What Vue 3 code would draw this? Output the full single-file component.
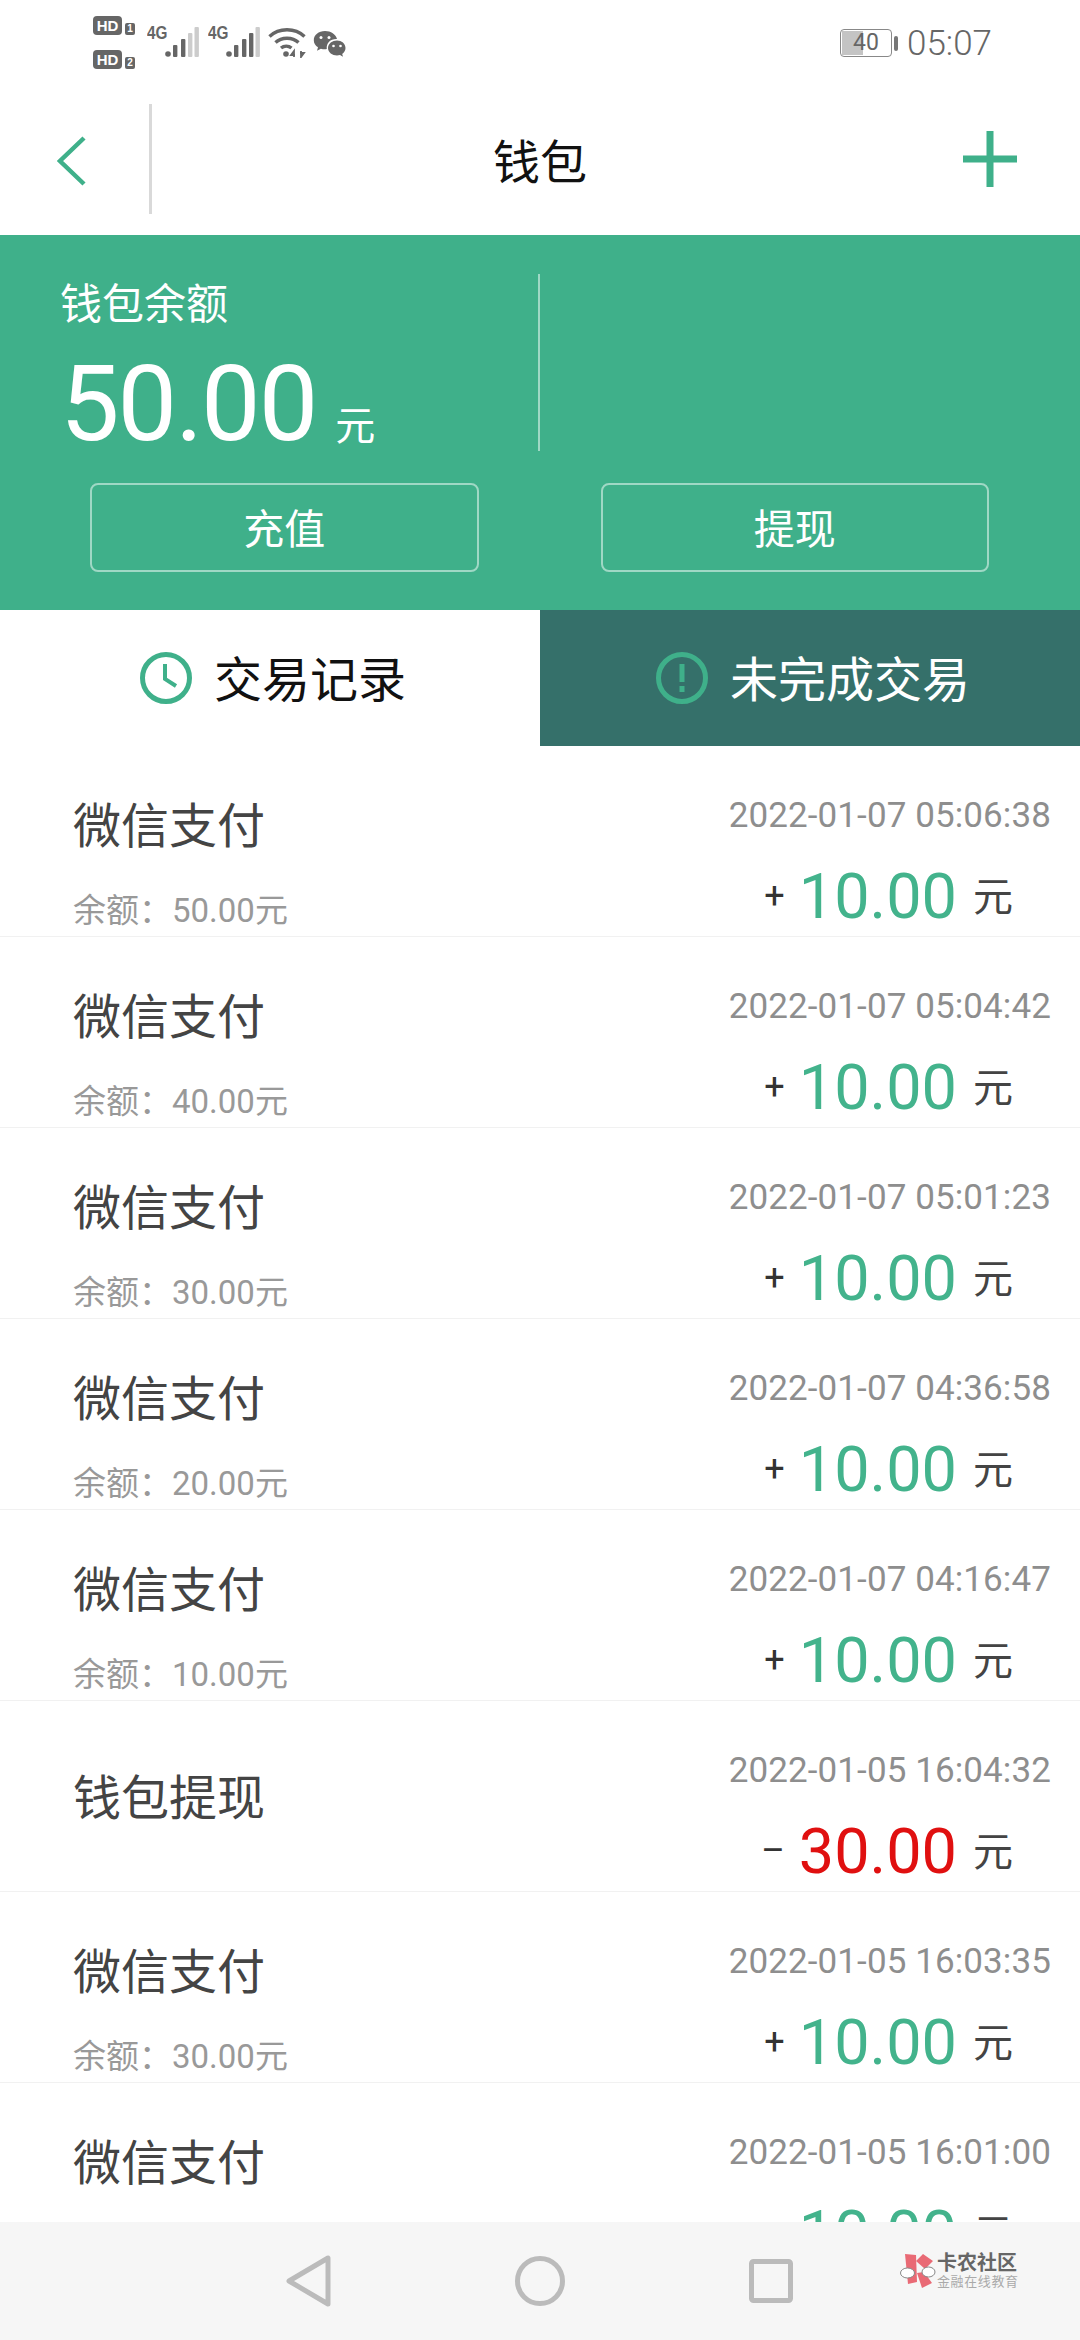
<script setup>
// 钱包流水，金额为正绿色，为负红色
const rows = [
  { name: '微信支付', balance: '50.00', time: '2022-01-07 05:06:38', sign: '+', amount: '10.00' },
  { name: '微信支付', balance: '40.00', time: '2022-01-07 05:04:42', sign: '+', amount: '10.00' },
  { name: '微信支付', balance: '30.00', time: '2022-01-07 05:01:23', sign: '+', amount: '10.00' },
  { name: '微信支付', balance: '20.00', time: '2022-01-07 04:36:58', sign: '+', amount: '10.00' },
  { name: '微信支付', balance: '10.00', time: '2022-01-07 04:16:47', sign: '+', amount: '10.00' },
  { name: '钱包提现', balance: '', time: '2022-01-05 16:04:32', sign: '–', amount: '30.00' },
  { name: '微信支付', balance: '30.00', time: '2022-01-05 16:03:35', sign: '+', amount: '10.00' },
  { name: '微信支付', balance: '20.00', time: '2022-01-05 16:01:00', sign: '+', amount: '10.00' }
]
// 信号栏，亮格数不同
const signals = [2, 3]
</script>

<template>
  <div class="phone">
    <div class="status">
      <div class="status-left">
        <div class="hd-col">
          <div v-for="n in 2" :key="n" class="hd-line">
            <span class="hd">HD</span>
            <span class="hd-num">{{ n }}</span>
          </div>
        </div>
        <div v-for="(lit, i) in signals" :key="i" class="signal">
          <span class="net">4G</span>
          <svg width="34" height="32" viewBox="0 0 34 32">
            <circle cx="3" cy="28" r="2.8" fill="#666" />
            <rect x="8" y="19" width="4.4" height="12" rx="1" fill="#666" />
            <rect x="16" y="13" width="4.4" height="18" rx="1" :fill="lit >= 2 ? '#666' : '#ccc'" />
            <rect x="23" y="7" width="4.4" height="24" rx="1" :fill="lit >= 3 ? '#666' : '#ccc'" />
            <rect x="29.5" y="1" width="4.4" height="30" rx="1" fill="#ccc" />
          </svg>
        </div>
        <svg class="wifi" width="38" height="32" viewBox="0 0 38 32" fill="none" stroke="#666" stroke-width="3.4">
          <path d="M1.5 10.5C11 1.5 27 1.5 36.5 10.5" />
          <path d="M7.5 16.5C13.5 10.8 24.5 10.8 30.5 16.5" />
          <path d="M13 22C16 19.6 20.5 19.6 23.5 22" />
          <circle cx="18" cy="28" r="2.8" fill="#666" stroke="none" />
          <path d="M26 31v-6l-3 4h4M33 25v6l3-4h-4" stroke-width="1.8" />
        </svg>
        <svg class="wechat" width="33" height="28" viewBox="0 0 33 28">
          <path d="M12 1C5.6 1 .8 5 .8 10.2c0 3 1.6 5.4 4.2 7.1l-1 3.4 3.9-2c1.2.3 2.6.6 4.1.6 1 0 1.3-.1 1.8-.2C13 12.6 18 8.6 24 9 22.8 4.4 17.9 1 12 1Z" fill="#666" />
          <path d="M32.5 18C32.5 13.6 28.6 10.5 24 10.5S15 13.6 15 18s4.4 7.5 9 7.5c1 0 2-.2 3-.5l3 1.8-.8-2.9c2.1-1.5 3.3-3.7 3.3-5.9Z" fill="#666" />
          <circle cx="8" cy="7.5" r="1.5" fill="#fff" />
          <circle cx="16" cy="7.5" r="1.5" fill="#fff" />
          <circle cx="20.5" cy="16" r="1.3" fill="#fff" />
          <circle cx="27.5" cy="16" r="1.3" fill="#fff" />
        </svg>
      </div>
      <div class="status-right">
        <div class="battery">
          <div class="battery-box">
            <span class="battery-fill"></span>
            <span class="battery-num">40</span>
          </div>
          <span class="battery-tip"></span>
        </div>
        <span class="clock">05:07</span>
      </div>
    </div>

    <div class="header">
      <div class="back">
        <svg width="30" height="50" viewBox="0 0 30 50" fill="none" stroke="#3fb08a" stroke-width="4.5">
          <path d="M27 2 3 25l24 23" />
        </svg>
      </div>
      <h1 class="title">钱包</h1>
      <div class="plus">
        <svg width="54" height="56" viewBox="0 0 54 56" fill="#3fb08a">
          <rect x="23.5" y="0" width="7" height="56" />
          <rect x="0" y="24.5" width="54" height="7" />
        </svg>
      </div>
    </div>

    <div class="wallet">
      <div class="wallet-top">
        <div class="wallet-left">
          <div class="wallet-label">钱包余额</div>
          <div class="wallet-amount">50.00<span class="wallet-unit">元</span></div>
        </div>
      </div>
      <div class="wallet-btns">
        <button class="btn">充值</button>
        <button class="btn">提现</button>
      </div>
    </div>

    <div class="tabs">
      <div class="tab active">
        <svg width="52" height="52" viewBox="0 0 52 52" fill="none" stroke="#3fb08a">
          <circle cx="26" cy="26" r="23.5" stroke-width="5" />
          <path d="M25 12v15l11 7" stroke-width="4" />
        </svg>
        <span>交易记录</span>
      </div>
      <div class="tab">
        <svg width="52" height="52" viewBox="0 0 52 52" fill="none" stroke="#3fb08a">
          <circle cx="26" cy="26" r="23.5" stroke-width="5" />
          <path d="M26 12v18M26 34v6" stroke-width="5" />
        </svg>
        <span>未完成交易</span>
      </div>
    </div>

    <div class="list">
      <div v-for="row in rows" :key="row.time" class="row">
        <div class="row-left" :class="{ single: !row.balance }">
          <div class="row-name">{{ row.name }}</div>
          <div v-if="row.balance" class="row-balance">余额：{{ row.balance }}元</div>
        </div>
        <div class="row-right">
          <div class="row-time">{{ row.time }}</div>
          <div class="row-amount">
            <span class="row-sign">{{ row.sign }}</span>
            <span class="row-num" :class="{ out: row.sign !== '+' }">{{ row.amount }}</span>
            <span class="row-unit">元</span>
          </div>
        </div>
      </div>
    </div>

    <div class="navbar">
      <svg class="nav-back" width="46" height="52" viewBox="0 0 46 52" fill="none" stroke="#bbb" stroke-width="5" stroke-linejoin="round">
        <path d="M42 3v46L3 26Z" />
      </svg>
      <svg class="nav-home" width="50" height="50" viewBox="0 0 50 50" fill="none" stroke="#bbb" stroke-width="5">
        <circle cx="25" cy="25" r="22.5" />
      </svg>
      <svg class="nav-recent" width="44" height="44" viewBox="0 0 44 44" fill="none" stroke="#bbb" stroke-width="5" stroke-linejoin="round">
        <rect x="2.5" y="2.5" width="39" height="39" rx="2" />
      </svg>
      <div class="mark">
        <svg width="36" height="36" viewBox="0 0 36 36">
          <path d="M5 1 16 2l1 27-9 2Z" fill="#e96a75" />
          <path d="M16 8 23 1l10 7-8 8ZM17 20l7-1 8 11-10 5Z" fill="#e96a75" />
          <ellipse cx="7.5" cy="20" rx="7" ry="5" fill="#fff" stroke="#888" stroke-width="1" />
          <ellipse cx="28.5" cy="19" rx="6.5" ry="5" fill="#fff" stroke="#888" stroke-width="1" />
        </svg>
        <div class="mark-text">
          <div class="mark-name">卡农社区</div>
          <div class="mark-sub">金融在线教育</div>
        </div>
      </div>
    </div>
  </div>
</template>

<style>
html, body {
  margin: 0;
  background: #fff;
}
</style>

<style scoped>
.phone {
  width: 1080px;
  height: 2340px;
  display: flex;
  flex-direction: column;
  overflow: hidden;
  background: #fff;
  font-family: Roboto, "Noto Sans CJK SC", sans-serif;
}

.status {
  height: 88px;
  flex: none;
  display: flex;
  justify-content: space-between;
  padding: 0 88px 0 93px;
  color: #666;
}
.status-left {
  display: flex;
  align-items: flex-start;
}
.hd-col {
  padding-top: 16px;
  display: flex;
  flex-direction: column;
  gap: 15px;
  width: 54px;
}
.hd-line {
  display: flex;
  align-items: flex-end;
  gap: 3px;
}
.hd {
  width: 29px;
  height: 19px;
  border-radius: 4px;
  background: #666;
  color: #fff;
  font-size: 15px;
  font-weight: 700;
  line-height: 19px;
  text-align: center;
  font-family: "Liberation Sans", sans-serif;
}
.hd-num {
  width: 10px;
  height: 12px;
  border-radius: 2px;
  background: #666;
  color: #fff;
  font-size: 10px;
  font-weight: 700;
  line-height: 12px;
  text-align: center;
  font-family: "Liberation Sans", sans-serif;
}
.signal {
  position: relative;
  width: 61px;
  height: 60px;
}
.net {
  position: absolute;
  left: 0;
  top: 25px;
  font-size: 18px;
  line-height: 17px;
  font-weight: 700;
  transform: scaleX(0.85);
  transform-origin: left;
  font-family: "Liberation Sans", sans-serif;
}
.signal svg {
  position: absolute;
  left: 18px;
  top: 26px;
}
.wifi {
  margin: 26px 0 0 -1px;
}
.wechat {
  margin: 30px 0 0 7px;
}
.status-right {
  display: flex;
  align-items: center;
  height: 86px;
}
.battery {
  display: flex;
  align-items: center;
  margin-right: 9px;
  gap: 2px;
}
.battery-box {
  position: relative;
  width: 52px;
  height: 28px;
  border: 1.5px solid #888;
  border-radius: 4px;
  box-sizing: border-box;
  overflow: hidden;
}
.battery-fill {
  position: absolute;
  left: 1px;
  top: 1px;
  bottom: 1px;
  width: 21px;
  background: #c4c4c4;
}
.battery-num {
  position: absolute;
  left: 0;
  right: 0;
  top: 0;
  text-align: center;
  font-size: 23px;
  line-height: 25px;
  color: #666;
}
.battery-tip {
  width: 4px;
  height: 15px;
  border-radius: 2px;
  background: #777;
}
.clock {
  font-size: 35px;
  color: #666;
  font-weight: 300;
}

.header {
  height: 147px;
  flex: none;
  display: flex;
  align-items: center;
  position: relative;
}
.back {
  width: 152px;
  height: 110px;
  flex: none;
  box-sizing: border-box;
  margin-bottom: 6px;
  border-right: 3px solid #d9d9d9;
  padding: 5px 0 0 57px;
  display: flex;
  align-items: center;
}
.title {
  flex: 1;
  margin: 0 152px 7px 0;
  text-align: center;
  font-size: 47px;
  font-weight: 400;
  color: #111;
}
.plus {
  position: absolute;
  right: 63px;
  top: 43px;
  line-height: 0;
}

.wallet {
  height: 375px;
  flex: none;
  background: #3fb08a;
  color: #fff;
  box-sizing: border-box;
  padding-top: 39px;
}
.wallet-top {
  height: 177px;
  width: 540px;
  border-right: 2px solid rgba(255, 255, 255, 0.5);
  box-sizing: border-box;
}
.wallet-left {
  padding-left: 60px;
}
.wallet-label {
  font-size: 42px;
  line-height: 62px;
}
.wallet-amount {
  margin-top: 22px;
  font-size: 106px;
  line-height: 92px;
  letter-spacing: -2px;
}
.wallet-unit {
  font-size: 40px;
  margin-left: 19px;
  letter-spacing: 0;
}
.wallet-btns {
  display: flex;
  padding: 32px 91px 0 90px;
  gap: 122px;
}
.btn {
  flex: 1;
  height: 89px;
  box-sizing: border-box;
  border: 2px solid rgba(255, 255, 255, 0.5);
  border-radius: 8px;
  background: none;
  color: #fff;
  font-family: inherit;
  font-size: 41px;
  padding: 0 0 4px;
}

.tabs {
  height: 136px;
  flex: none;
  display: flex;
}
.tab {
  width: 540px;
  box-sizing: border-box;
  padding-left: 6px;
  display: flex;
  align-items: center;
  justify-content: center;
  gap: 22px;
  background: #35706a;
  color: #fff;
  font-size: 48px;
}
.tab span {
  margin-bottom: 5px;
}
.tab.active {
  background: #fff;
  color: #111;
}

.list {
  flex: 1;
  min-height: 0;
  overflow: hidden;
}
.row {
  height: 191px;
  box-sizing: border-box;
  border-bottom: 1px solid #f1f1f1;
  display: flex;
  justify-content: space-between;
}
.row-left {
  padding: 49px 0 0 73px;
}
.row-left.single {
  padding-top: 6px;
  display: flex;
  align-items: center;
}
.row-name {
  font-size: 48px;
  line-height: 64px;
  color: #444;
}
.row-balance {
  margin-top: 32px;
  font-size: 33px;
  line-height: 40px;
  color: #999;
}
.row-right {
  padding: 50px 29px 0 0;
  display: flex;
  flex-direction: column;
  align-items: flex-end;
}
.row-time {
  font-size: 35px;
  line-height: 40px;
  letter-spacing: 0.1px;
  color: #8e8e8e;
}
.row-amount {
  margin: 20px 38px 0 0;
  height: 80px;
  display: flex;
  align-items: center;
}
.row-sign {
  font-size: 36px;
  color: #333;
  margin-right: 14px;
}
.row-num {
  font-size: 63px;
  color: #43b38c;
  margin-right: 16px;
}
.row-num.out {
  color: #e01010;
}
.row-unit {
  font-size: 40px;
  color: #444;
  margin-bottom: 4px;
}

.navbar {
  height: 118px;
  flex: none;
  background: #f6f6f6;
  position: relative;
  display: flex;
  align-items: center;
  padding-left: 286px;
}
.nav-home {
  margin-left: 183px;
}
.nav-recent {
  margin-left: 184px;
}
.mark {
  position: absolute;
  left: 900px;
  top: 31px;
  display: flex;
  align-items: center;
  gap: 1px;
}
.mark-name {
  font-size: 20px;
  line-height: 21px;
  font-weight: 700;
  color: #666;
}
.mark-sub {
  font-size: 13px;
  line-height: 15px;
  color: #aaa;
  letter-spacing: 0.6px;
}
</style>
